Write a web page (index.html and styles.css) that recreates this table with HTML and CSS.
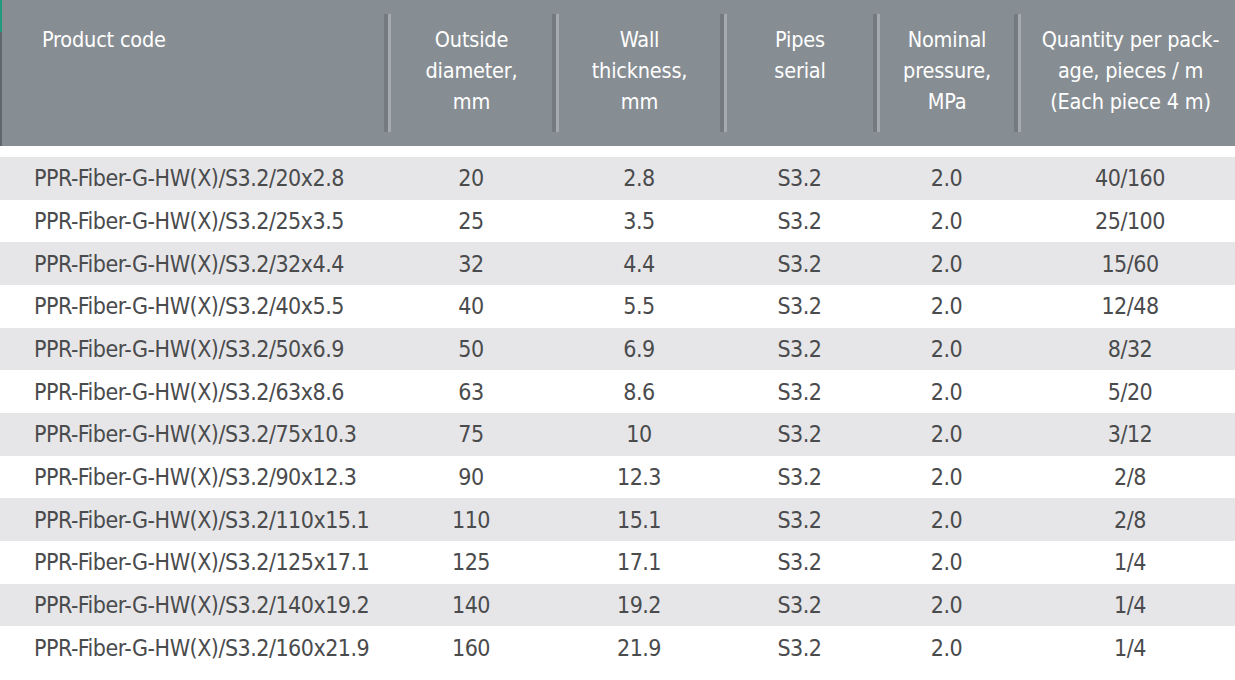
FILE: index.html
```html
<!DOCTYPE html>
<html lang="en">
<head>
<meta charset="utf-8">
<title>PPR-Fiber pipes</title>
<link rel="stylesheet" href="styles.css">
</head>
<body>
<div class="table">
  <div class="head">
    <div class="hcell first">Product code</div>
    <div class="hcell">Outside<br>diameter,<br>mm</div>
    <div class="hcell">Wall<br>thickness,<br>mm</div>
    <div class="hcell">Pipes<br>serial</div>
    <div class="hcell">Nominal<br>pressure,<br>MPa</div>
    <div class="hcell last">Quantity per pack-<br>age, pieces / m<br>(Each piece 4 m)</div>
  </div>
  <div class="body">
    <div class="row"><span class="code">PPR-Fiber-G-HW(X)/S3.2/20x2.8</span><span>20</span><span>2.8</span><span>S3.2</span><span>2.0</span><span class="qty">40/160</span></div>
    <div class="row"><span class="code">PPR-Fiber-G-HW(X)/S3.2/25x3.5</span><span>25</span><span>3.5</span><span>S3.2</span><span>2.0</span><span class="qty">25/100</span></div>
    <div class="row"><span class="code">PPR-Fiber-G-HW(X)/S3.2/32x4.4</span><span>32</span><span>4.4</span><span>S3.2</span><span>2.0</span><span class="qty">15/60</span></div>
    <div class="row"><span class="code">PPR-Fiber-G-HW(X)/S3.2/40x5.5</span><span>40</span><span>5.5</span><span>S3.2</span><span>2.0</span><span class="qty">12/48</span></div>
    <div class="row"><span class="code">PPR-Fiber-G-HW(X)/S3.2/50x6.9</span><span>50</span><span>6.9</span><span>S3.2</span><span>2.0</span><span class="qty">8/32</span></div>
    <div class="row"><span class="code">PPR-Fiber-G-HW(X)/S3.2/63x8.6</span><span>63</span><span>8.6</span><span>S3.2</span><span>2.0</span><span class="qty">5/20</span></div>
    <div class="row"><span class="code">PPR-Fiber-G-HW(X)/S3.2/75x10.3</span><span>75</span><span>10</span><span>S3.2</span><span>2.0</span><span class="qty">3/12</span></div>
    <div class="row"><span class="code">PPR-Fiber-G-HW(X)/S3.2/90x12.3</span><span>90</span><span>12.3</span><span>S3.2</span><span>2.0</span><span class="qty">2/8</span></div>
    <div class="row"><span class="code">PPR-Fiber-G-HW(X)/S3.2/110x15.1</span><span>110</span><span>15.1</span><span>S3.2</span><span>2.0</span><span class="qty">2/8</span></div>
    <div class="row"><span class="code">PPR-Fiber-G-HW(X)/S3.2/125x17.1</span><span>125</span><span>17.1</span><span>S3.2</span><span>2.0</span><span class="qty">1/4</span></div>
    <div class="row"><span class="code">PPR-Fiber-G-HW(X)/S3.2/140x19.2</span><span>140</span><span>19.2</span><span>S3.2</span><span>2.0</span><span class="qty">1/4</span></div>
    <div class="row"><span class="code">PPR-Fiber-G-HW(X)/S3.2/160x21.9</span><span>160</span><span>21.9</span><span>S3.2</span><span>2.0</span><span class="qty">1/4</span></div>
  </div>
</div>
</body>
</html>
```
FILE: styles.css
```css
html, body {
  margin: 0;
  padding: 0;
  background: #ffffff;
}
body {
  font-family: "DejaVu Sans Condensed", "DejaVu Sans", sans-serif;
  font-stretch: condensed;
  width: 1235px;
  height: 680px;
  overflow: hidden;
}
.head {
  display: grid;
  grid-template-columns: 384px 168px 168px 153px 141px 1fr;
  grid-template-rows: 118px;
  padding: 14px 0;
  background-color: #878e93;
  background-image: linear-gradient(to bottom, #1f9a7f 0 32px, #5f676c 32px);
  background-size: 2px 100%;
  background-repeat: no-repeat;
  color: #ffffff;
  font-size: 21.5px;
  line-height: 31px;
  letter-spacing: -0.2px;
  white-space: nowrap;
}
.hcell {
  text-align: center;
  padding-top: 10px;
  border-left: 4px solid #737a80;
  background: linear-gradient(to right, #a4aaaf 0 3px, transparent 3px);
  padding-left: 3px;
}
.hcell.first {
  text-align: left;
  border-left: 0;
  background: none;
  padding-left: 42px;
}
.hcell.last {
  padding-left: 8px;
}
.body {
  margin-top: 11px;
}
.row {
  display: grid;
  grid-template-columns: 387px 168px 168px 153px 141px 1fr;
  height: 42.66px;
  align-items: center;
  color: #4a4b4d;
  font-size: 23px;
  letter-spacing: -0.5px;
  white-space: nowrap;
}
.row:nth-child(odd) {
  background: #e6e6e8;
}
.row span {
  text-align: center;
}
.row .code {
  text-align: left;
  padding-left: 34px;
}
.row .qty {
  padding-left: 8px;
}
```
